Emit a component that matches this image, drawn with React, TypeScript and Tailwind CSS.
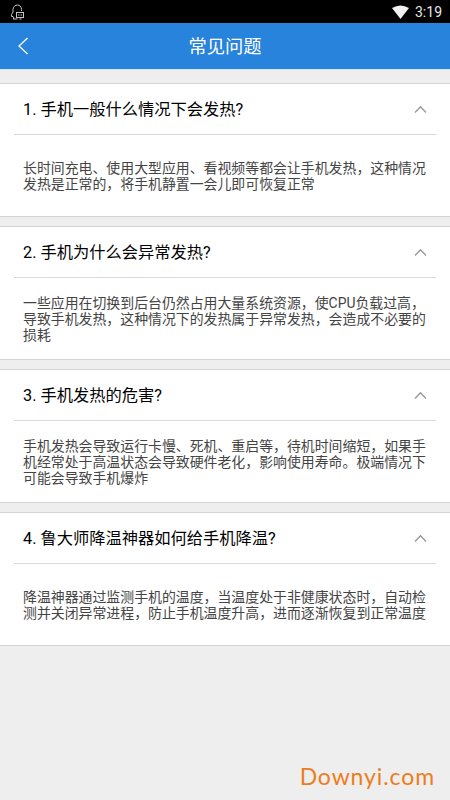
import React from "react";

interface Faq {
  title: string;
  lines: string[];
}

const faqs: Faq[] = [
  {
    title: "1. 手机一般什么情况下会发热?",
    lines: [
      "长时间充电、使用大型应用、看视频等都会让手机发热，这种情况",
      "发热是正常的，将手机静置一会儿即可恢复正常",
    ],
  },
  {
    title: "2. 手机为什么会异常发热?",
    lines: [
      "一些应用在切换到后台仍然占用大量系统资源，使CPU负载过高，",
      "导致手机发热，这种情况下的发热属于异常发热，会造成不必要的",
      "损耗",
    ],
  },
  {
    title: "3. 手机发热的危害?",
    lines: [
      "手机发热会导致运行卡慢、死机、重启等，待机时间缩短，如果手",
      "机经常处于高温状态会导致硬件老化，影响使用寿命。极端情况下",
      "可能会导致手机爆炸",
    ],
  },
  {
    title: "4. 鲁大师降温神器如何给手机降温?",
    lines: [
      "降温神器通过监测手机的温度，当温度处于非健康状态时，自动检",
      "测并关闭异常进程，防止手机温度升高，进而逐渐恢复到正常温度",
    ],
  },
];

function StatusBar() {
  return (
    <div className="h-[23px] bg-black flex items-center justify-between pl-[10px] pr-2">
      <svg className="w-[15px] h-4" viewBox="0 0 15 16" fill="none" stroke="#c4c4c4" strokeWidth="1">
        <path d="M11.500 7V5.500C11.500 2.500 9.500 1 7.500 1S3 2.500 3 5.500V8L1.500 10.500V12.500H3L4 14L3 15H7.500" />
        <rect x="6.500" y="8.500" width="7" height="5" />
        <path d="M8 11h1M9.500 11h1M11 11h1M9.500 15L11.500 15" />
      </svg>
      <div className="flex items-center gap-[6px]">
        <svg className="w-[17px] h-[14px]" viewBox="0 0 17 14" fill="#f0f0f0">
          <path d="M0 3Q8.500-2 17 3L8.500 14Z" />
        </svg>
        <span className="text-[#e8e8e8] text-[14px] leading-none pt-px">3:19</span>
      </div>
    </div>
  );
}

function FaqCard({ title, lines }: Faq) {
  return (
    <section className="bg-white border-y border-[#d4d4d4]">
      <div className="mx-[14px] h-[51px] pl-[9px] pr-[9px] flex items-center justify-between border-b border-[#d9d9d9]">
        <h2 className="pt-[3px] text-[16.250px] text-black whitespace-nowrap">{title}</h2>
        <svg className="w-[13px] h-2" viewBox="0 0 13 8" fill="none" stroke="#999" strokeWidth="1.4">
          <path d="M1 7.500L6.500 1.800L12 7.500" />
        </svg>
      </div>
      <div className="h-[81px] pl-[23px] flex flex-col justify-center text-[13.900px] leading-4 text-[#444] whitespace-nowrap">
        {lines.map((line) => (
          <p key={line}>{line}</p>
        ))}
      </div>
    </section>
  );
}

export default function App() {
  return (
    <div className="w-full h-screen overflow-hidden bg-[#eeeeee] flex flex-col font-[Roboto,'Noto_Sans_CJK_SC',sans-serif]">
      <StatusBar />
      <header className="h-[46px] bg-[#2783db] grid grid-cols-[60px_1fr_60px] items-center text-white">
        <svg className="w-3 h-[18px] ml-[17px]" viewBox="0 0 12 18" fill="none" stroke="currentColor" strokeWidth="1.300">
          <path d="M10.500 1L2 9L10.500 17" />
        </svg>
        <h1 className="pt-[2px] text-[18.300px] text-center">常见问题</h1>
      </header>
      <main className="flex-1 border-t border-[#d8e4ef] pt-[13px] flex flex-col gap-[9px]">
        {faqs.map((faq) => (
          <FaqCard key={faq.title} {...faq} />
        ))}
      </main>
      <footer className="pr-[15px] pb-3 text-right text-[#ed7d1a] font-[Lato,sans-serif] text-[23px] tracking-[0.900px] leading-6">
        Downyi.com
      </footer>
    </div>
  );
}
